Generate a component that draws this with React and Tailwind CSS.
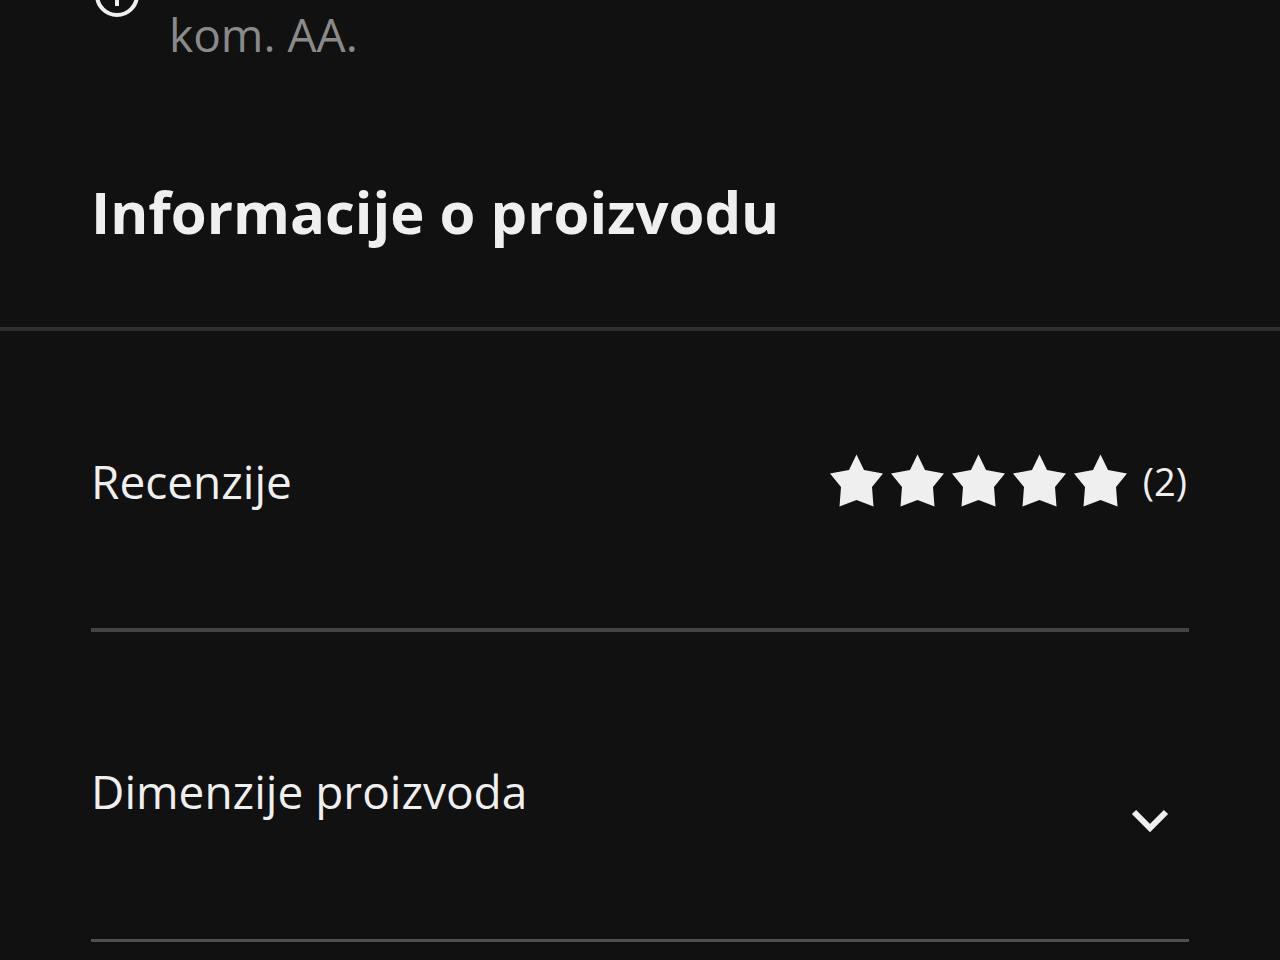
import React, { useState } from 'react';

const InfoIcon = () => (
  <svg className="w-[52px] h-5 shrink-0" viewBox="0 0 52 20" fill="none" stroke="currentColor" strokeWidth="4" aria-hidden="true">
    <circle cx="26" cy="-5" r="20" />
    <path d="M26 -9V6" />
  </svg>
);

const Star = () => (
  <svg className="w-[61px] h-[54px]" viewBox="0 0 61 54" fill="currentColor" aria-hidden="true">
    <path d="M30.5 0.5L38 16L57 19.5L46 33L47.5 52.5L30.5 46L13.5 52.5L15 33L4 19.5L23 16Z" />
  </svg>
);

const ChevronDown = () => (
  <svg className="w-[78px] h-[52px]" viewBox="0 0 78 52" fill="none" stroke="currentColor" strokeWidth="6" aria-hidden="true">
    <path d="M23 17L39 33L55 17" />
  </svg>
);

const Reviews = ({ rating, count }) => (
  <span className="flex items-center">
    <span className="flex" role="img" aria-label={`${rating} / 5`}>
      {Array.from({ length: rating }).map((_, i) => (
        <Star key={i} />
      ))}
    </span>
    <span className="pl-3 pr-0.5 text-[38px] leading-[60px]">({count})</span>
  </span>
);

const App = () => {
  const [open, setOpen] = useState(false);

  return (
    <main className="min-h-screen bg-[#111111] text-[#efefef] font-['Open_Sans','Noto_Sans',sans-serif]">
      {/* Delivery note */}
      <div className="flex items-start px-[91px]">
        <InfoIcon />
        <p className="pl-[26px] text-[46px] leading-[68px] text-[#8a8a8a]">kom. AA.</p>
      </div>

      <h2 className="px-[91px] pt-[104px] pb-[75px] text-[58px] leading-[80px] font-bold">
        Informacije o proizvodu
      </h2>

      <section className="border-t-4 border-[#2e2e2e] px-[91px]">
        <button
          type="button"
          className="flex w-full items-center justify-between border-b-4 border-[#444444] pt-[116px] pb-[113px] text-left text-[46px] leading-[68px]"
        >
          <span>Recenzije</span>
          <Reviews rating={5} count={2} />
        </button>

        <button
          type="button"
          aria-expanded={open}
          onClick={() => setOpen(!open)}
          className="flex w-full items-start justify-between border-b-3 border-[#505050] pt-[125px] pb-[92px] text-left text-[46px] leading-[68px]"
        >
          <span>Dimenzije proizvoda</span>
          <span className="pt-[38px]">
            <ChevronDown />
          </span>
        </button>
      </section>
    </main>
  );
};

export default App;
